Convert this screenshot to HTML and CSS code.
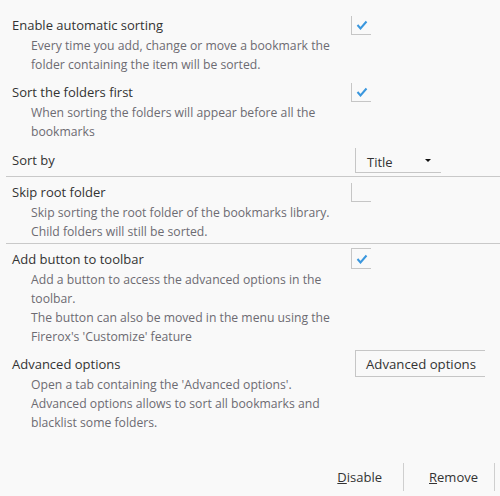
FILE: index.html
```html
<!DOCTYPE html>
<html lang="en">
<head>
  <meta charset="UTF-8" />
  <title>Bookmark sorter options</title>
  <link rel="stylesheet" href="styles.css">
</head>
<body>
  <div class="page">
    <div class="option first">
      <div class="head">
        <span class="label">Enable automatic sorting</span>
        <span class="check"><svg width="12" height="10" viewBox="0 0 12 10"><path d="M1.5 5 L4.5 8.5 L10.5 1.5" /></svg></span>
      </div>
      <div class="desc">Every time you add, change or move a bookmark the<br>folder containing the item will be sorted.</div>
    </div>

    <div class="option">
      <div class="head">
        <span class="label">Sort the folders first</span>
        <span class="check"><svg width="12" height="10" viewBox="0 0 12 10"><path d="M1.5 5 L4.5 8.5 L10.5 1.5" /></svg></span>
      </div>
      <div class="desc">When sorting the folders will appear before all the<br>bookmarks</div>
    </div>

    <div class="option split sort">
      <div class="head">
        <span class="label">Sort by</span>
        <span class="select">Title <i class="arrow"></i></span>
      </div>
    </div>

    <div class="option split after">
      <div class="head">
        <span class="label">Skip root folder</span>
        <span class="check"></span>
      </div>
      <div class="desc">Skip sorting the root folder of the bookmarks library.<br>Child folders will still be sorted.</div>
    </div>

    <div class="option after">
      <div class="head">
        <span class="label">Add button to toolbar</span>
        <span class="check boxed"><svg width="12" height="10" viewBox="0 0 12 10"><path d="M1.5 5 L4.5 8.5 L10.5 1.5" /></svg></span>
      </div>
      <div class="desc">Add a button to access the advanced options in the<br>toolbar.<br>The button can also be moved in the menu using the<br>Firerox's 'Customize' feature</div>
    </div>

    <div class="option">
      <div class="head">
        <span class="label">Advanced options</span>
        <button class="btn">Advanced options</button>
      </div>
      <div class="desc">Open a tab containing the 'Advanced options'.<br>Advanced options allows to sort all bookmarks and<br>blacklist some folders.</div>
    </div>

    <div class="footer">
      <button class="foot-btn"><u>D</u>isable</button>
      <button class="foot-btn remove"><u>R</u>emove</button>
    </div>
  </div>
</body>
</html>
```
FILE: styles.css
```css
body {
  margin: 0;
  background: #f9f9f9;
  font-family: 'Open Sans', sans-serif;
  color: #333;
}
.page {
  height: 100vh;
  display: flex;
  flex-direction: column;
}
.option {
  margin-left: 6px;
  padding: 0 0 6px 6px;
}
.option.first {
  padding-top: 13px;
}
.option.sort {
  padding-top: 1px;
}
.option.split {
  border-bottom: 1px solid #c9c9c9;
  padding-bottom: 3px;
}
.option.split.after {
  padding-bottom: 2px;
}
.option.after {
  padding-top: 3px;
}
.head {
  display: grid;
  grid-template-columns: 339px auto;
  align-items: start;
}
.label {
  padding-top: 1px;
  font-size: 13px;
  line-height: 22px;
}
.desc {
  padding-left: 19px;
  font-size: 12.2px;
  line-height: 19px;
  color: #6d6b72;
}
.check {
  margin-top: 3px;
  width: 19px;
  height: 18px;
  border-left: 1px solid #c6c6c6;
  border-bottom: 1px solid #c6c6c6;
  display: flex;
  align-items: center;
  justify-content: center;
}
.check.boxed {
  margin-top: 1px;
  height: 19px;
  border-top: 1px solid #c6c6c6;
}
.check svg path {
  fill: none;
  stroke: #3a97de;
  stroke-width: 2;
}
.select {
  margin-left: 4px;
  box-sizing: border-box;
  width: 86px;
  height: 25px;
  padding: 3px 10px 0 11px;
  border-left: 1px solid #c6c6c6;
  border-bottom: 1px solid #c6c6c6;
  display: flex;
  align-items: center;
  justify-content: space-between;
  font-size: 13px;
}
.arrow {
  width: 0;
  height: 0;
  border-left: 3px solid transparent;
  border-right: 3px solid transparent;
  border-top: 3px solid #111;
  margin-bottom: 3px;
}
.btn {
  margin: -2px 0 -2px 4px;
  width: 130px;
  height: 27px;
  padding: 1px 0 0 10px;
  text-align: left;
  background: #f9f9f9;
  border: 1px solid #c6c6c6;
  border-right: none;
  font-family: 'Open Sans', sans-serif;
  font-size: 13.2px;
  color: #333;
}
.footer {
  margin-top: auto;
  margin-bottom: 5px;
  padding-right: 5px;
  display: flex;
  justify-content: flex-end;
}
.foot-btn {
  height: 28px;
  padding: 0 21px;
  background: none;
  border: none;
  border-right: 1px solid #cfcfcf;
  font-family: 'Open Sans', sans-serif;
  font-size: 13px;
  color: #333;
}
.foot-btn.remove {
  padding: 0 16px 0 25px;
}
```
